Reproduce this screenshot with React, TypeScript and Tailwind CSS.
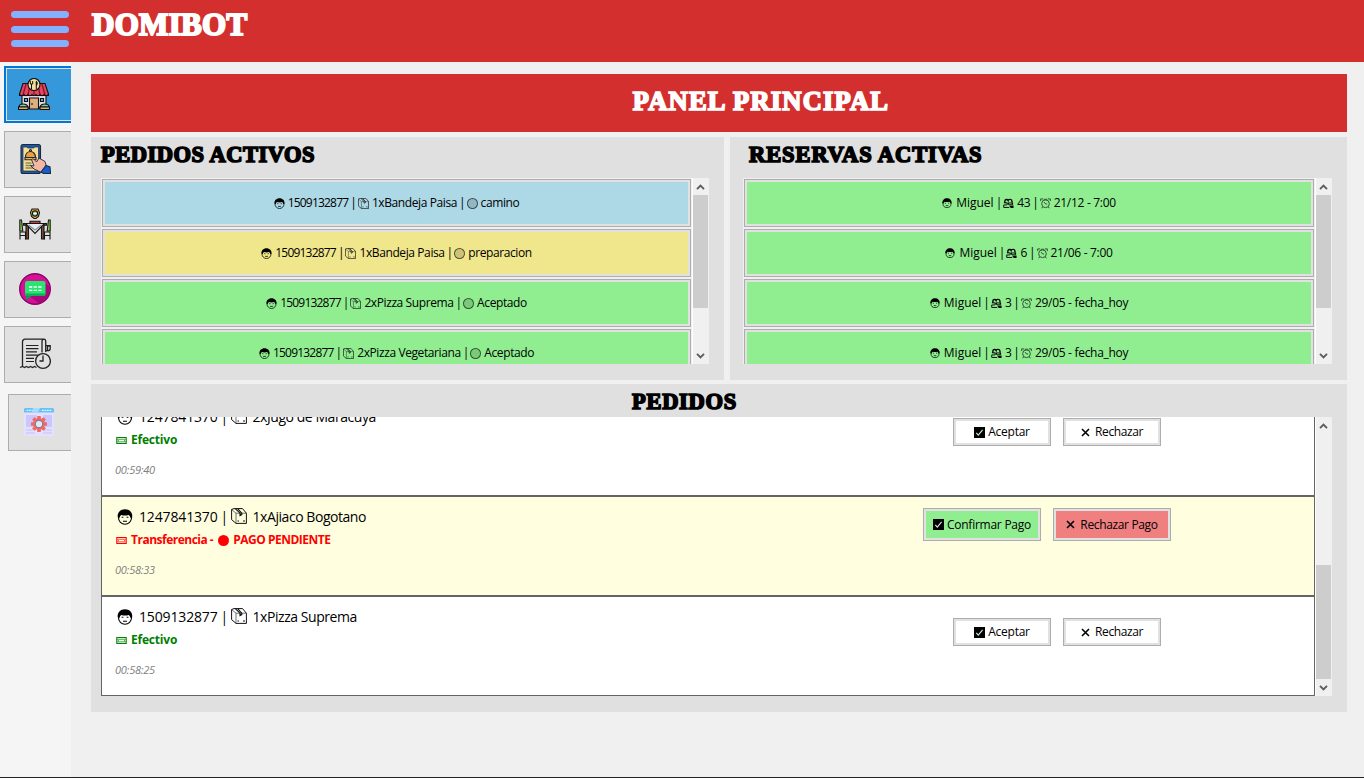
import React from "react";

type IconProps = { className?: string };

function FaceIcon({ className }: IconProps) {
  return (
    <svg className={className} viewBox="0 0 16 16" fill="none">
      <circle cx="8" cy="8.800" r="6.500" stroke="#000" strokeWidth="1.100" />
      <path d="M0.8 8.500C0 3.500 3.500 .3 8 .3s8 3.200 7.200 8.200l-1.900.3c-.2-1.500-.8-2.500-1.600-2.900-2.400.8-5.100.8-7.400 0-.8.4-1.400 1.400-1.600 2.900z" fill="#000" />
      <path d="M4.600 8.300h1.800M9.600 8.300h1.800M6 12.200h4" stroke="#000" strokeWidth="1.100" />
    </svg>
  );
}

function BoxIcon({ className }: IconProps) {
  return (
    <svg className={className} viewBox="0 0 16 16" fill="none" stroke="#111" strokeWidth="1">
      <path d="M.6 1.500 3 .6h8.500l3.900 4.600v10.200H5L.6 11.600z" />
      <path d="M.6 1.500 5 5.200v10.200M5 5.200h10.400" strokeWidth=".6" />
      <path d="m4.500.8 4.500 4.400v2.400l1.800-1v-1.400L6.800.8" strokeWidth="1.100" />
      <path d="M12 13h2M6.500 13h1.500" />
    </svg>
  );
}

function PeopleIcon({ className }: IconProps) {
  return (
    <svg className={className} viewBox="0 0 12 12" fill="none" stroke="#000">
      <path d="M2 5.500V3.500C2 1.200 5 1.200 5.600 2.600 6 1 9.800 1 9.800 3.500V5" strokeWidth="1.500" />
      <path d="M1 5.300h3.500v2M.8 10.300V7.600h3.500M.8 10.300h6" strokeWidth="1" />
      <path d="M5 4.800h6v2.500H5zM6.500 8.300h5v2.700H8.500z" fill="#000" stroke="none" />
      <path d="M6.500 6.200h3" stroke="#90ee90" strokeWidth=".8" />
    </svg>
  );
}

function ClockIcon({ className }: IconProps) {
  return (
    <svg className={className} viewBox="0 0 12 12" fill="none" stroke="#26472a" strokeWidth="1">
      <circle cx="6" cy="6.300" r="4.200" />
      <path d="M.7 3.300V1h2.600M11.300 3.300V1H8.700M2.800 9.700l-1 1.500M9.200 9.700l1 1.500M4.500 4.500 6 6.500h1.800M4 1.400h4" />
    </svg>
  );
}

function NoteIcon({ className }: IconProps) {
  return (
    <svg className={className} viewBox="0 0 12 8" fill="none" stroke="currentColor">
      <rect x=".6" y=".6" width="10.800" height="6.800" strokeWidth="1.200" />
      <path d="M1 2.600h10M1 5.500h10" strokeWidth=".8" />
      <path d="M2.500 3.400v1.500M9.500 3.400v1.500" strokeWidth=".8" />
    </svg>
  );
}

function CheckIcon() {
  return (
    <svg className="mr-[3px] size-[11px] shrink-0" viewBox="0 0 11 11">
      <rect width="11" height="11" fill="#000" />
      <path d="m2.300 5.800 2 2.300 4.300-5.300" fill="none" stroke="#cfeee0" strokeWidth="1.100" />
    </svg>
  );
}

function CrossIcon() {
  return (
    <svg className="mr-[5px] size-[9px] shrink-0" viewBox="0 0 9 9">
      <path d="m1 1 7 7M8 1 1 8" stroke="#000" strokeWidth="1.600" />
    </svg>
  );
}

function StoreIcon() {
  return (
    <svg className="size-8" viewBox="0 0 32 32" stroke="#111" strokeWidth="1.100">
      <path d="M4 17h24v13H4z" fill="#dcdce2" />
      <path d="M5 5.500h22l3.500 10.500v1.500h-29V16z" fill="#e8455c" />
      <path d="M8 6 5 17M12 6l-2 11M16 6v11M20 6l2 11M24 6l3 11" fill="none" stroke="#7d1830" strokeWidth="1.300" />
      <path d="M2 16.500c1 1.500 3 1.500 4 0 1 1.500 3 1.500 4 0 1 1.500 3 1.500 4 0 1 1.500 3 1.500 4 0 1 1.500 3 1.500 4 0 1 1.500 3 1.500 4 0 1 1.500 3 1.500 4 0" fill="none" />
      <path d="M11.500 20h9v11h-9z" fill="#e0ad7c" />
      <path d="M6.500 20.500h3v3h-3zM22.500 20.500h3v3h-3z" fill="#4fb4e4" />
      <path d="M1 29c0-4 8-4 9 0zM22 29c1-4 9-4 9 0z" fill="#79cfa5" />
      <path d="M.5 29h9.500v2.500H.5zM22 29h9.500v2.500H22z" fill="#e9ad68" />
      <path d="M14 25v2" />
      <circle cx="16" cy="6.500" r="6" fill="#f4dfa0" />
      <path d="M13.500 6v5M12.300 3v3h2.400V3M18.300 3.200v7.800" fill="none" strokeWidth="1" />
      <path d="M18.300 3.200c1.600 1 1.600 3.500 0 4.300z" fill="#111" strokeWidth=".5" />
    </svg>
  );
}

function MobileOrderIcon() {
  return (
    <svg className="size-8" viewBox="0 0 32 32" stroke="#1c2940" strokeWidth="1.100">
      <rect x="2" y="1.500" width="19.500" height="29" rx="2" fill="#1c58a8" />
      <path d="M4 4h3.500l1.500 1h5.500l1.500-1h3.500v24H4z" fill="#f6df91" strokeWidth=".7" />
      <path d="M6.500 14.500c0-8 10-8 10 0z" fill="#ee9f38" />
      <path d="M6 14.500h11v2.200H6z" fill="#f3b54c" />
      <circle cx="11.500" cy="7.500" r="1" fill="#ee9f38" />
      <path d="M6.500 20h6M6.500 22.500h6M6.500 25h8" stroke="#8d875f" strokeWidth="1.700" />
      <path d="M12.500 16.500c1.500-1.500 3.200.2 5 2.500l2.500-4 6 3.500 1.500 5-5 6-7.500-3.500-3.500-3.500 3.500.5z" fill="#f3b7a4" strokeWidth=".9" />
      <path d="m22 29 5-6.500 4 1.500.5 6.500h-7z" fill="#1260cf" />
    </svg>
  );
}

function TableIcon() {
  return (
    <svg className="size-8" viewBox="0 0 32 32" stroke="#161616" strokeWidth="1.100">
      <path d="M.8 12h1.700l1.300 11H.8zM31.200 12h-1.700l-1.300 11h3z" fill="#86cf4f" />
      <path d="M1 31.500V24h5.500v7.500M31 31.500V24h-5.500v7.500M1 27.500h5.500M25.500 27.500H31" fill="none" />
      <path d="M7 17h2.500v14H7zM22.500 17H25v14h-2.500z" fill="#7a4c38" />
      <path d="M4.500 15.500h23v1.800h-23z" fill="#46465a" />
      <path d="M6.500 15.500h19L16 25.500z" fill="#e7edf0" />
      <path d="m9.500 17 6.500 5 6.500-5" fill="none" stroke="#879198" />
      <path d="M11 13.200h10v2.300H11z" fill="#c83c4a" />
      <path d="M11.500 4.500 13 1h6l1.500 3.500-1 4-2.500 2h-2l-2.500-2z" fill="#e9b532" />
      <circle cx="16" cy="5.500" r="2.600" fill="#aad5d9" />
      <path d="M14.500 5.500h3" stroke="#fff" />
    </svg>
  );
}

function ChatIcon() {
  return (
    <svg className="size-8" viewBox="0 0 32 32">
      <circle cx="16" cy="16" r="15.300" fill="#d80f96" stroke="#850867" strokeWidth="1.400" />
      <path d="M26 9.500 31 14c.5 6-3 14-11 16.300L9 22z" fill="#a80679" />
      <path d="M7 21v6.200l6.500-5z" fill="#0e9950" />
      <rect x="6" y="8" width="20.500" height="15" rx="2.200" fill="#27e56f" />
      <path d="M6 20.500v.5c0 1.200 1 2 2.200 2h16.100c1.200 0 2.200-.8 2.200-2v-.5z" fill="#0eaf58" />
      <path d="M10 14h12.500M10 17.300h12.500" stroke="#fff" strokeWidth="1.300" strokeDasharray="3.300 1.300" />
    </svg>
  );
}

function HistoryIcon() {
  return (
    <svg className="size-8" viewBox="0 0 32 32" fill="none" stroke="#222" strokeWidth="1.300">
      <path d="M3.500 28.500V4c0-1.700 1-2.800 2.500-2.800h19c1.200 0 1.700.8 1.700 2.300v10.500M23 14.500V3.500c0-1.300.8-2.300 2-2.300M26.700 7.700h4.500v2.800c0 1.500-1 2.200-2.500 2.200h-2M31 8h-2.500v4" />
      <path d="m1 29.500 2.500-1 2 1 2-1 2 1 2-1 2 1 2-1 2 1" />
      <path d="M7 7.500h12.500M7 10.700h12.500M7 13.900h11M7 17.100h12.500M7 20.300h8M7 23.500h8" strokeWidth="1.200" />
      <circle cx="24" cy="23" r="7.400" />
      <path d="M24 17.500V23h-3.500" />
    </svg>
  );
}

function SettingsIcon() {
  const teeth = [0, 45, 90, 135, 180, 225, 270, 315];
  return (
    <svg className="size-8" viewBox="0 0 32 32">
      <rect x="1" y="2" width="30" height="28" rx="1.500" fill="#e4e1ff" />
      <path d="M1 6.500V3.500C1 2.600 1.700 2 2.500 2h27c.8 0 1.500.6 1.500 1.500v3z" fill="#68c2f7" />
      <path d="M10 2h7l-2 4.500H9z" fill="#a9dcfc" />
      <path d="M3.500 4.300h6M19 4.300h10" stroke="#e0f4ff" strokeWidth="1.200" strokeDasharray="1.800 .7" />
      <path d="M3 9h11v12H3zM20 9h9v12h-9z" fill="#cbc6fb" />
      <path d="M3 24h7M3 27h9M21 24h8M20 27h9" stroke="#c5c0f5" strokeWidth="1.200" />
      <g fill="#f16960">
        {teeth.map((a) => (
          <rect key={a} x="14.200" y="10" width="3.600" height="5" rx=".5" transform={`rotate(${a} 16 18)`} />
        ))}
        <circle cx="16" cy="18" r="6" />
      </g>
      <circle cx="16" cy="18" r="3.700" fill="#e9e5f9" stroke="#78839e" strokeWidth="1.200" />
    </svg>
  );
}

function Arrow({ down = false }: { down?: boolean }) {
  return (
    <svg className={down ? "h-[6px] w-[9px] rotate-180" : "h-[6px] w-[9px]"} viewBox="0 0 9 6">
      <path d="m1 5.200 3.500-3.500L8 5.200" fill="none" stroke="#5c5c5c" strokeWidth="1.900" />
    </svg>
  );
}

function Scrollbar({ thumb }: { thumb: string }) {
  return (
    <div className="flex w-[17px] shrink-0 flex-col items-center border-x border-l-white border-r-[#f0f0f0] bg-[#f0f0f0]">
      <div className="flex h-[17px] w-full shrink-0 items-center justify-center"><Arrow /></div>
      <div className="flex w-full flex-1 flex-col">
        <div className={`w-full bg-[#cdcdcd] ${thumb}`} />
      </div>
      <div className="flex h-[17px] w-full shrink-0 items-center justify-center"><Arrow down /></div>
    </div>
  );
}

const small = "font-['Open_Sans',sans-serif] text-[12px] leading-[16px] tracking-[-0.4px] whitespace-pre text-black";
const stencil = "font-['Liberation_Serif',serif] font-bold whitespace-nowrap";

function Chip({ color, children }: { color: string; children: React.ReactNode }) {
  return (
    <div className={`flex h-12 shrink-0 items-center justify-center border border-[#adadad] shadow-[inset_0_0_0_2px_#e1e1e1] ${color} ${small}`}>
      {children}
    </div>
  );
}

function Bar() {
  return <span className="mr-[1px] ml-[2px] tracking-normal">|</span>;
}

const activeOrders = [
  { phone: "1509132877", item: "1xBandeja Paisa", state: "camino", color: "bg-[#add8e6]" },
  { phone: "1509132877", item: "1xBandeja Paisa", state: "preparacion", color: "bg-[#f0e68c]" },
  { phone: "1509132877", item: "2xPizza Suprema", state: "Aceptado", color: "bg-[#90ee90]" },
  { phone: "1509132877", item: "2xPizza Vegetariana", state: "Aceptado", color: "bg-[#90ee90]" },
];

const bookings = [
  { name: "Miguel", people: "43", date: "21/12 - 7:00" },
  { name: "Miguel", people: "6", date: "21/06 - 7:00" },
  { name: "Miguel", people: "3", date: "29/05 - fecha_hoy" },
  { name: "Miguel", people: "3", date: "29/05 - fecha_hoy" },
];

const orders = [
  { phone: "1247841370", item: "2xJugo de Maracuya", time: "00:59:40", pending: false },
  { phone: "1247841370", item: "1xAjiaco Bogotano", time: "00:58:33", pending: true },
  { phone: "1509132877", item: "1xPizza Suprema", time: "00:58:25", pending: false },
];

function ActionButton({ size, children }: { size: string; children: React.ReactNode }) {
  return (
    <button className={`flex items-center justify-center border border-[#adadad] shadow-[inset_0_0_0_2px_#e1e1e1] ${size} ${small}`}>
      {children}
    </button>
  );
}

function OrderRow({ order }: { order: (typeof orders)[number] }) {
  const { pending } = order;
  return (
    <div className={`flex h-[100px] shrink-0 justify-between border border-[#646464] pl-[13px] ${pending ? "bg-[#ffffe0]" : "bg-white"}`}>
      <div className="flex flex-col">
        <div className="mt-[9px] flex h-5 items-center pl-[2px] font-['Open_Sans',sans-serif] text-[14px] whitespace-pre text-black">
          <FaceIcon className="mt-px mr-[6px] size-4" />
          <span className="tracking-[-0.15px]">{order.phone}</span>
          <span className="ml-[2px] w-[11px] pl-px">|</span>
          <BoxIcon className="mr-[6px] size-4" />
          <span className="tracking-[-0.45px]">{order.item}</span>
        </div>
        <div className={`mt-[6px] flex h-4 items-center pl-[1px] font-['Open_Sans',sans-serif] text-[12px] font-bold whitespace-pre ${pending ? "tracking-[-0.5px] text-[#ff0000]" : "tracking-[-0.2px] text-[#008000]"}`}>
          <NoteIcon className="mr-[4px] h-[7px] w-[11px]" />
          {pending ? (
            <>
              <span>Transferencia -</span>
              <span className="mr-1 ml-[5px] size-[11px] rounded-full bg-[#ff0000]" />
              <span>PAGO PENDIENTE</span>
            </>
          ) : (
            <span>Efectivo</span>
          )}
        </div>
        <div className="mt-[14px] h-4 font-['Open_Sans',sans-serif] text-[11px] leading-4 tracking-[-0.25px] text-[#808080] italic">{order.time}</div>
      </div>
      {pending ? (
        <div className="mt-[11px] mr-[143px] flex gap-3">
          <ActionButton size="h-[33px] w-[118px] bg-[#90ee90]"><CheckIcon /><span className="tracking-[-0.25px]">Confirmar Pago</span></ActionButton>
          <ActionButton size="h-[33px] w-[118px] bg-[#f08080]"><CrossIcon /><span className="tracking-[-0.35px]">Rechazar Pago</span></ActionButton>
        </div>
      ) : (
        <div className="mt-[21px] mr-[153px] flex gap-3">
          <ActionButton size="h-[28px] w-[98px] bg-white"><CheckIcon /><span className="tracking-[-0.25px]">Aceptar</span></ActionButton>
          <ActionButton size="h-[28px] w-[98px] bg-white"><CrossIcon /><span>Rechazar</span></ActionButton>
        </div>
      )}
    </div>
  );
}

const navButton = "flex h-[57px] shrink-0 items-center border border-r-0 border-[#adadad] bg-[#e1e1e1] pb-px pl-[14px]";

export default function App() {
  return (
    <div className="flex h-[778px] w-[1364px] flex-col overflow-hidden border-b border-[#222] bg-[#f0f0f0]">
      <header className="flex h-[62px] shrink-0 bg-[#d32f2f]">
        <div className="flex w-[69px] flex-col gap-[7.500px] pt-[11px] pl-[11px]">
          <span className="h-[7px] rounded-full bg-[#82b1ff]" />
          <span className="h-[7px] rounded-full bg-[#82b1ff]" />
          <span className="h-[7px] rounded-full bg-[#82b1ff]" />
        </div>
        <h1 className={`ml-[23px] pt-[5px] text-[31px] leading-10 tracking-[0.300px] text-white [-webkit-text-stroke:2px_white] ${stencil}`}>DOMIBOT</h1>
      </header>
      <div className="flex min-h-0 flex-1">
        <nav className="flex w-[71px] shrink-0 flex-col gap-2 bg-[#f5f5f5] pt-1 pl-1">
          <button className="flex h-[57px] shrink-0 items-center border-2 border-r-0 border-[#0078d7] bg-[#3498db]">
            <span className="flex h-full w-full items-center border border-r-0 border-[#e1e1e1] pb-px pl-[11px]"><StoreIcon /></span>
          </button>
          <button className={navButton}><MobileOrderIcon /></button>
          <button className={navButton}><TableIcon /></button>
          <button className={navButton}><ChatIcon /></button>
          <button className={navButton}><HistoryIcon /></button>
          <button className={`mt-[3px] ml-1 ${navButton}`}><SettingsIcon /></button>
        </nav>
        <main className="flex flex-1 flex-col pt-3 pr-[17px] pl-5">
          <div className="flex h-[58px] shrink-0 justify-center bg-[#d32f2f] pl-[84px]">
            <h2 className={`pt-[9px] text-[26.500px] leading-9 tracking-[1.200px] text-white [-webkit-text-stroke:1.700px_white] ${stencil}`}>PANEL PRINCIPAL</h2>
          </div>
          <div className="mt-[5px] flex h-[243px] shrink-0 gap-[6px]">
            <section className="w-[633px] bg-[#e0e0e0] pl-[10px]">
              <h3 className={`h-[41px] pt-[4px] text-[22.500px] leading-7 tracking-[0.500px] text-black [-webkit-text-stroke:1.600px_black] ${stencil}`}>PEDIDOS ACTIVOS</h3>
              <div className="flex h-[186px] w-[608px] overflow-hidden bg-[#f0f0f0]">
                <div className="flex flex-1 flex-col gap-[2px] pt-px pr-px pl-px">
                  {activeOrders.map((o, i) => (
                    <Chip key={i} color={o.color}>
                      <FaceIcon className="mr-[3px] size-[11px]" />
                      <span className="tracking-[-0.8px]">{o.phone}</span>
                      <Bar />
                      <BoxIcon className="mr-[3px] size-[11px]" />
                      <span>{o.item}</span>
                      <Bar />
                      <span className="mr-[3px] size-[11px] rounded-full border border-black/60 bg-black/15" />
                      <span>{o.state}</span>
                    </Chip>
                  ))}
                </div>
                <Scrollbar thumb="h-[113px]" />
              </div>
            </section>
            <section className="flex-1 bg-[#e0e0e0] pl-[13px]">
              <h3 className={`h-[41px] pt-[4px] pl-[6px] text-[22.500px] leading-7 tracking-[0.900px] text-black [-webkit-text-stroke:1.600px_black] ${stencil}`}>RESERVAS ACTIVAS</h3>
              <div className="flex h-[186px] w-[589px] overflow-hidden bg-[#f0f0f0]">
                <div className="flex flex-1 flex-col gap-[2px] pt-px pr-px pl-px">
                  {bookings.map((b, i) => (
                    <Chip key={i} color="bg-[#90ee90]">
                      <FaceIcon className="mr-[4px] size-[10px]" />
                      <span className="tracking-normal">{b.name}</span>
                      <Bar />
                      <PeopleIcon className="mr-[3px] size-[11px]" />
                      <span>{b.people}</span>
                      <Bar />
                      <ClockIcon className="mr-[3px] size-[11px]" />
                      <span className="tracking-[-0.3px]">{b.date}</span>
                    </Chip>
                  ))}
                </div>
                <Scrollbar thumb="h-[113px]" />
              </div>
            </section>
          </div>
          <section className="mt-1 h-[328px] shrink-0 bg-[#e0e0e0] pl-[10px]">
            <h3 className={`h-[33px] pt-[4px] pl-[531px] text-[22.500px] leading-7 tracking-[0.700px] text-black [-webkit-text-stroke:1.600px_black] ${stencil}`}>PEDIDOS</h3>
            <div className="flex h-[279px] w-[1231px] overflow-hidden bg-[#f0f0f0]">
              <div className="flex flex-1 flex-col justify-end">
                {orders.map((o) => (
                  <OrderRow key={o.time} order={o} />
                ))}
              </div>
              <Scrollbar thumb="mt-[131px] h-[114px]" />
            </div>
          </section>
        </main>
      </div>
    </div>
  );
}
